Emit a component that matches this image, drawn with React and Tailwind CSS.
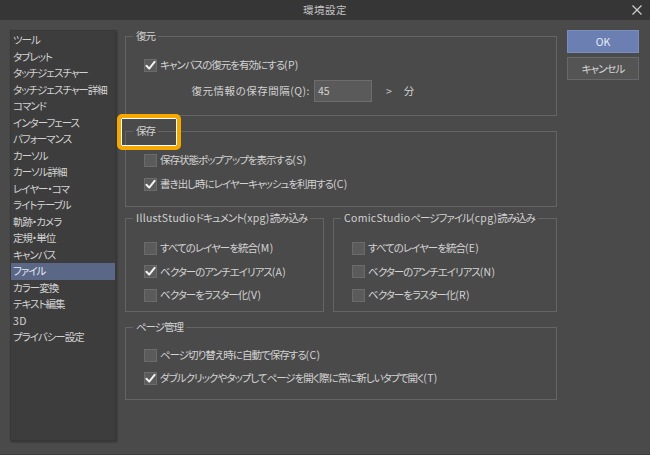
import React from "react";

function T({ s }) {
  const parts = s.split(/([\x20-\x7e]+)/).filter(Boolean);
  return (
    <>
      {parts.map((p, i) =>
        /^[\x20-\x7e]+$/.test(p) ? (
          <span key={i} className="tracking-[0.3px]">{p}</span>
        ) : (
          <span key={i}>{p}</span>
        )
      )}
    </>
  );
}

function Check({ checked }) {
  return (
    <span className="w-[13px] h-[13px] shrink-0 bg-[#5b5b5b] border border-[#6b6b6b] flex items-center justify-center">
      {checked && (
        <svg width="11" height="11" viewBox="0 0 11 11">
          <path d="M1.5 5.8 L4.2 8.6 L9.6 1.8" fill="none" stroke="#f2f2f2" strokeWidth="2" strokeLinecap="round" strokeLinejoin="round" />
        </svg>
      )}
    </span>
  );
}

function Row({ checked, s }) {
  return (
    <div className="flex items-center gap-[3px] h-[14px]">
      <Check checked={checked} />
      <span className="whitespace-nowrap"><T s={s} /></span>
    </div>
  );
}

function Group({ title, className, children }) {
  return (
    <div className={"relative border border-[#646464] " + className}>
      <span className="absolute -top-[8px] left-[7px] px-[3px] leading-[14px] bg-[#4a4a4a] whitespace-nowrap"><T s={title} /></span>
      {children}
    </div>
  );
}

const items = [
  "ツール", "タブレット", "タッチジェスチャー", "タッチジェスチャー詳細", "コマンド",
  "インターフェース", "パフォーマンス", "カーソル", "カーソル詳細", "レイヤー・コマ",
  "ライトテーブル", "軌跡・カメラ", "定規・単位", "キャンバス", "ファイル",
  "カラー変換", "テキスト編集", "3D", "プライバシー設定",
];

export default function App() {
  return (
    <div className="relative w-[650px] h-[455px] bg-[#4a4a4a] flex flex-col text-[10.5px] tracking-[-1px] text-[#d2d2d2] font-['Noto_Sans_CJK_JP','Noto_Sans',sans-serif] [font-feature-settings:'palt'] overflow-hidden">
      <div className="h-[20px] shrink-0 bg-[#363636] flex items-center justify-center relative">
        <span className="text-[#c4c4c4] tracking-[0.5px]">環境設定</span>
        <svg className="absolute right-[8px] top-[5px]" width="10" height="10" viewBox="0 0 10 10">
          <path d="M0.5 0.5 L9.5 9.5 M9.5 0.5 L0.5 9.5" stroke="#cfcfcf" strokeWidth="1.2" />
        </svg>
      </div>
      <div className="flex-1 flex pl-[10px] pr-[11px] pt-[10px] pb-[7px] border-b border-[#3c3c3c]">
        <div className="w-[106px] h-[411px] shrink-0 bg-[#3d3d3d] border border-[#383838] pt-[1px] shadow-[1px_1px_2px_rgba(0,0,0,0.35)]">
          {items.map((t) => (
            <div
              key={t}
              className={
                "h-[16.5px] leading-[16.5px] pl-[2px] whitespace-nowrap " +
                (t === "ファイル" ? "bg-[#5a6787] text-[#e4e8f0]" : "")
              }
            >
              <T s={t} />
            </div>
          ))}
        </div>

        <div className="ml-[9px] w-[432px] shrink-0 flex flex-col pt-[6px]">
          <Group title="復元" className="h-[80px] pt-[21px] pl-[18px]">
            <Row checked s="キャンバスの復元を有効にする(P)" />
            <div className="flex items-center mt-[8px] h-[22px]">
              <span className="w-[166px] text-right whitespace-nowrap tracking-[0.5px]">復元情報の保存間隔(Q):</span>
              <div className="ml-[4px] w-[58px] h-[22px] bg-[#5a5a5a] border border-[#6d6d6d] flex items-center pl-[3px] tracking-normal">45</div>
              <span className="ml-[14px]">&gt;</span>
              <span className="ml-[13px]">分</span>
            </div>
          </Group>

          <Group title="保存" className="mt-[15px] h-[76px] pt-[21px] pl-[18px] flex flex-col gap-[10px]">
            <Row s="保存状態ポップアップを表示する(S)" />
            <Row checked s="書き出し時にレイヤーキャッシュを利用する(C)" />
          </Group>

          <div className="mt-[11px] flex gap-[9px]">
            <Group
              title="IllustStudioドキュメント(xpg)読み込み"
              className="w-[199px] h-[94px] pt-[22px] pl-[18px] flex flex-col gap-[9.5px]"
            >
              <Row s="すべてのレイヤーを統合(M)" />
              <Row checked s="ベクターのアンチエイリアス(A)" />
              <Row s="ベクターをラスター化(V)" />
            </Group>
            <Group
              title="ComicStudioページファイル(cpg)読み込み"
              className="w-[224px] h-[94px] pt-[22px] pl-[18px] flex flex-col gap-[9.5px]"
            >
              <Row s="すべてのレイヤーを統合(E)" />
              <Row s="ベクターのアンチエイリアス(N)" />
              <Row s="ベクターをラスター化(R)" />
            </Group>
          </div>

          <Group title="ページ管理" className="mt-[15px] h-[73px] pt-[20px] pl-[18px] flex flex-col gap-[9px]">
            <Row s="ページ切り替え時に自動で保存する(C)" />
            <Row checked s="ダブルクリックやタップしてページを開く際に常に新しいタブで開く(T)" />
          </Group>
        </div>

        <div className="ml-[10px] w-[72px] shrink-0 flex flex-col gap-[4px]">
          <button className="h-[23px] bg-[#6c7fb2] border border-[#7b8dbd] text-[#e6ebf5] tracking-normal">OK</button>
          <button className="h-[23px] bg-[#545454] border border-[#686868] text-[#d6d6d6]">キャンセル</button>
        </div>
      </div>

      <div className="absolute left-[117px] top-[114px] w-[64px] h-[36px] rounded-[5px] border-[4px] border-[#f6a800]">
        <div className="w-full h-full border-[1.5px] border-white rounded-[1px]" />
      </div>
    </div>
  );
}
